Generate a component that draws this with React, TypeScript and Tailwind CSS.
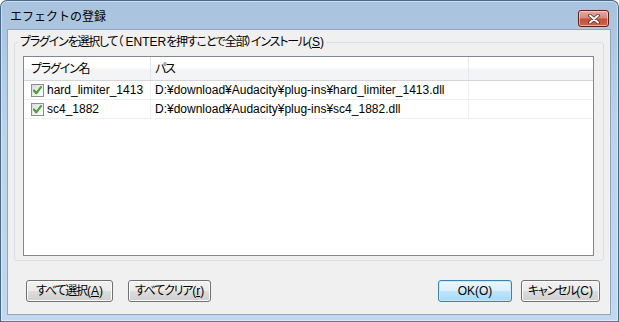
import React from 'react';

const font = "font-['Liberation_Sans','Noto_Sans_CJK_JP',sans-serif] [font-feature-settings:'palt']";

// Japanese runs are squeezed a little to get close to Meiryo UI widths
function J({ children }: { children: React.ReactNode }) {
  return <span className="tracking-[-1.2px]">{children}</span>;
}

function CheckBox() {
  return (
    <span className="relative inline-block w-[13px] h-[13px] border border-[#8e8f8f] bg-[linear-gradient(135deg,#dcdcdc,#ffffff)] shrink-0">
      <svg className="absolute left-0 top-0" width="11" height="11" viewBox="0 0 11 11">
        <path d="M2 5.5 L4.3 8.3 L9 2" fill="none" stroke="#2d8a1c" strokeWidth="2" strokeLinecap="round" strokeLinejoin="round" />
        <path d="M2 5.5 L4.3 8.3 L9 2" fill="none" stroke="#63c24a" strokeWidth="0.8" strokeLinecap="round" strokeLinejoin="round" />
      </svg>
    </span>
  );
}

const rows = [
  { name: 'hard_limiter_1413', path: 'D:¥download¥Audacity¥plug-ins¥hard_limiter_1413.dll' },
  { name: 'sc4_1882', path: 'D:¥download¥Audacity¥plug-ins¥sc4_1882.dll' },
];

function WinButton({ children, primary, className }: { children: React.ReactNode; primary?: boolean; className?: string }) {
  return (
    <button
      className={
        'h-[22px] rounded-[3px] border text-[12px] leading-none text-black flex items-center justify-center ' +
        (primary
          ? 'border-[#3c7fb1] bg-[linear-gradient(to_bottom,#eaf6fd_0%,#d9f0fc_50%,#bee6fd_50%,#a7d9f5_100%)] shadow-[inset_0_0_0_1px_#c8ecfc] '
          : 'border-[#707070] bg-[linear-gradient(to_bottom,#f2f2f2_0%,#ebebeb_50%,#dddddd_50%,#cfcfcf_100%)] shadow-[inset_0_0_0_1px_#fcfcfc] ') +
        (className ?? '')
      }
    >
      {children}
    </button>
  );
}

export default function App() {
  return (
    <div className={`w-[619px] h-[322px] bg-white ${font}`}>
      <div className="h-full flex flex-col rounded-t-[7px] border border-[#46698b] border-b-[#2a8ca0] bg-[linear-gradient(to_bottom,#a9c2dd,#bcd3ea_40%,#c2d8ee)] shadow-[inset_0_0_0_1px_rgba(255,255,255,0.45)] pl-[6px] pr-[7px] pb-[6px]">
        {/* title bar */}
        <div className="h-[28px] flex items-start justify-between">
          <span className="pl-[3px] pt-[9px] text-[12px] leading-[14px] text-black [font-feature-settings:normal]">エフェクトの登録</span>
          <div className="mt-[9px] mr-[2px] w-[31px] h-[17px] rounded-[3px] border border-[#5a2118] bg-[linear-gradient(to_bottom,#e6a99e_0%,#d88a7c_45%,#c4503c_55%,#c8664f_100%)] shadow-[inset_0_0_0_1px_rgba(255,235,230,0.55)] flex items-center justify-center">
            <svg width="12" height="10" viewBox="0 0 12 10">
              <path d="M2 1.5 L10 8.5 M10 1.5 L2 8.5" stroke="#5a2a22" strokeWidth="3.6" strokeLinecap="round" />
              <path d="M2 1.5 L10 8.5 M10 1.5 L2 8.5" stroke="#ffffff" strokeWidth="2" strokeLinecap="round" />
            </svg>
          </div>
        </div>

        {/* client area */}
        <div className="flex-1 flex flex-col bg-[#f0f0f0] border border-[#8fa6bf]">
          <fieldset className="mx-[6px] mt-[4px] rounded-[3px] border border-[#d5dfe5] p-0 pb-[4px]">
            <legend className="ml-[3px] px-[2px] text-[12px] leading-[16px] text-black">
              <J>プラグインを選択して（</J> ENTER<J>を押すことで全部）インストール</J>(<span className="underline">S</span>)
            </legend>
            <div className="ml-[8px] mr-[9px] mt-[6px] h-[200px] border border-[#828790] bg-white text-[12px] text-black">
              <div className="flex h-[24px] border-b border-[#d5d5d5] bg-[linear-gradient(to_bottom,#ffffff_0%,#ffffff_45%,#f3f4f6_55%,#f3f4f6_100%)]">
                <div className="w-[127px] pl-[7px] flex items-center border-r border-[#e3e8ee]"><J>プラグイン名</J></div>
                <div className="w-[318px] pl-[4px] flex items-center border-r border-[#e3e8ee]"><J>パス</J></div>
                <div className="flex-1" />
              </div>
              {rows.map((r) => (
                <div key={r.name} className="flex h-[19px] border-b border-[#f0f0f0]">
                  <div className="w-[127px] pl-[7px] flex items-center gap-[3px] border-r border-[#f0f0f0]">
                    <CheckBox />
                    <span>{r.name}</span>
                  </div>
                  <div className="w-[318px] pl-[4px] flex items-center border-r border-[#f0f0f0]">{r.path}</div>
                  <div className="flex-1" />
                </div>
              ))}
            </div>
          </fieldset>

          <div className="flex items-center justify-between pl-[18px] pr-[10px] mt-[19px]">
            <div className="flex gap-[15px]">
              <WinButton className="w-[87px]">
                <J>すべて選択</J>(<span className="underline">A</span>)
              </WinButton>
              <WinButton className="w-[83px]">
                <J>すべてクリア</J>(<span className="underline">r</span>)
              </WinButton>
            </div>
            <div className="flex gap-[9px]">
              <WinButton primary className="w-[74px]">OK(O)</WinButton>
              <WinButton className="w-[79px]"><J>キャンセル</J>(C)</WinButton>
            </div>
          </div>
        </div>
      </div>
    </div>
  );
}
